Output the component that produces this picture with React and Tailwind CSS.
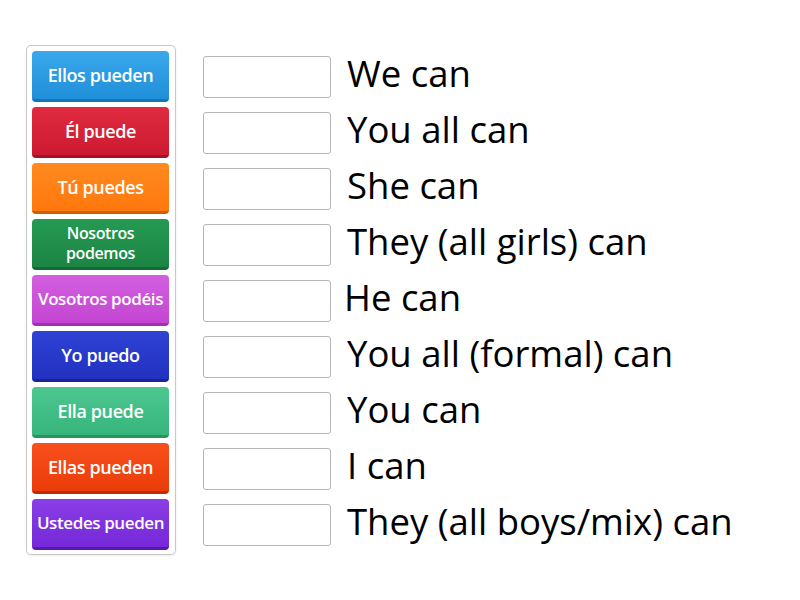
const tiles = [
  { label: "Ellos pueden", size: "text-[18px]", cls: "bg-gradient-to-b from-[#3aa8ec] to-[#1e8fd8] border-b-[#1675b5]" },
  { label: "Él puede", size: "text-[18px]", cls: "bg-gradient-to-b from-[#e02a40] to-[#cc1a30] border-b-[#a01426]" },
  { label: "Tú puedes", size: "text-[18px]", cls: "bg-gradient-to-b from-[#ff8a1e] to-[#ff780c] border-b-[#d25e00]" },
  { label: "Nosotros podemos", size: "text-[16px]", cls: "bg-gradient-to-b from-[#259a52] to-[#1c8544] border-b-[#146a35]" },
  { label: "Vosotros podéis", size: "text-[17px]", cls: "bg-gradient-to-b from-[#d35fe0] to-[#c445d2] border-b-[#a030b0]" },
  { label: "Yo puedo", size: "text-[18px]", cls: "bg-gradient-to-b from-[#2e42d4] to-[#2231c0] border-b-[#18249a]" },
  { label: "Ella puede", size: "text-[18px]", cls: "bg-gradient-to-b from-[#4cc790] to-[#36b57c] border-b-[#27945f]" },
  { label: "Ellas pueden", size: "text-[18px]", cls: "bg-gradient-to-b from-[#f8501c] to-[#ea3c08] border-b-[#c02e00]" },
  { label: "Ustedes pueden", size: "text-[17px]", cls: "bg-gradient-to-b from-[#8a3ee6] to-[#7528d8] border-b-[#5a18b0]" },
];

const answers = [
  "We can",
  "You all can",
  "She can",
  "They (all girls) can",
  "He can",
  "You all (formal) can",
  "You can",
  "I can",
  "They (all boys/mix) can",
];

export default function App() {
  return (
    <div
      className="w-[800px] h-[600px] bg-white relative"
      style={{ fontFamily: "'Open Sans', Lato, sans-serif" }}
    >
      <div className="flex pt-[45px] pl-[26px]">
        {/* tile bank */}
        <div className="w-[150px] h-[510px] border border-[#c8c8c8] rounded-[5px] px-[5px] pt-[5px] flex flex-col gap-[5px] shadow-[0_1px_2px_rgba(0,0,0,0.08)]">
          {tiles.map((t) => (
            <div
              key={t.label}
              className={`h-[51px] w-[137px] rounded-[4px] border-b-[3px] flex items-center justify-center text-center text-white font-semibold tracking-[-0.4px] whitespace-nowrap ${t.size} ${t.cls}`}
            >
              {t.label === "Nosotros podemos" ? (
                <span className="leading-[20px]">Nosotros<br />podemos</span>
              ) : (
                <span className="leading-[20px]">{t.label}</span>
              )}
            </div>
          ))}
        </div>

        {/* answer rows */}
        <div className="flex flex-col ml-[27px] pt-[11px] gap-[14px]">
          {answers.map((a, i) => (
            <div key={a} className="flex items-center h-[42px]">
              <div className="w-[128px] h-[42px] border border-[#b5b5b5] rounded-[3px] bg-white" />
              <span
                className={`text-[36.5px] leading-[42px] -mt-[9px] text-black whitespace-nowrap ${i === 4 ? "ml-[13px]" : "ml-[16px]"}`}
              >
                {a}
              </span>
            </div>
          ))}
        </div>
      </div>
    </div>
  );
}
